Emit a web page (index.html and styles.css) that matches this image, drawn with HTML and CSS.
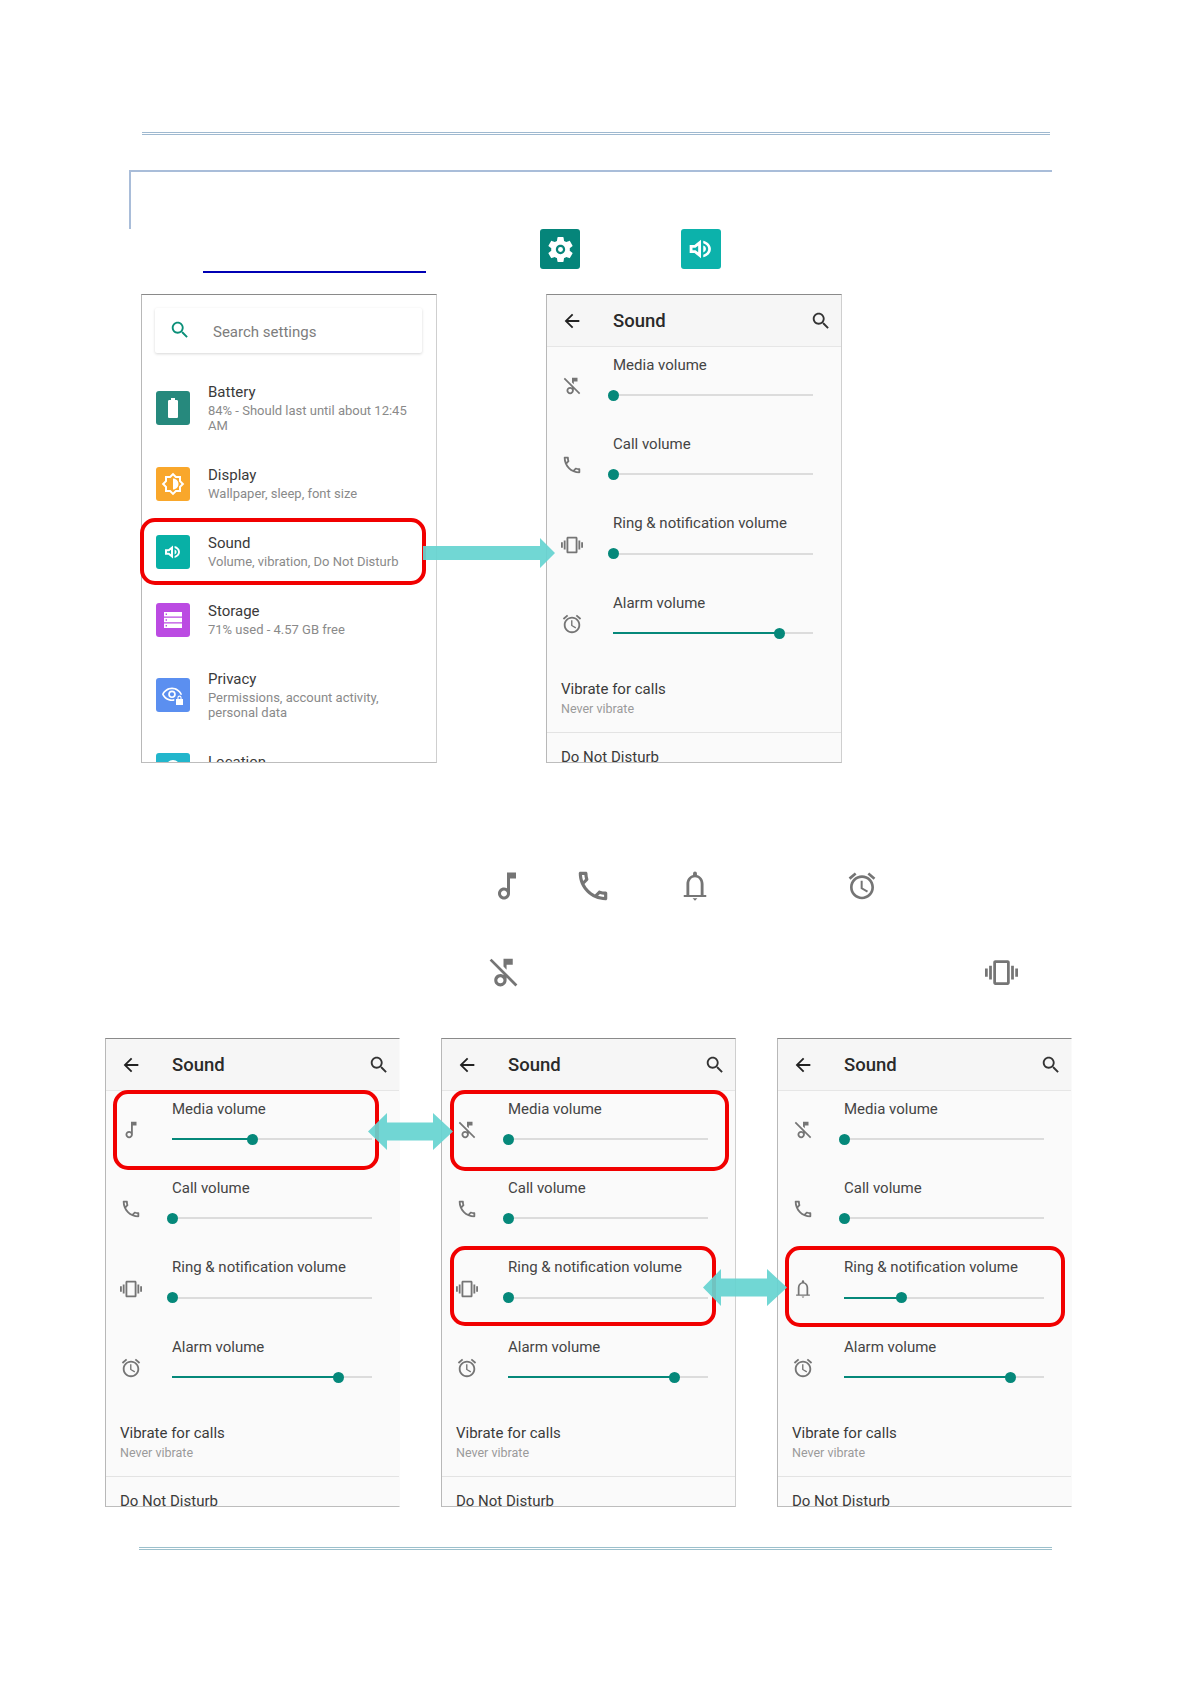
FILE: index.html
```html
<!DOCTYPE html>
<html lang="en">
<head>
<meta charset="utf-8">
<title>Sound settings</title>
<link rel="stylesheet" href="styles.css">
</head>
<body>
<svg class="sprite" aria-hidden="true">
  <symbol id="i-back" viewBox="0 0 24 24"><path d="M20 11H7.83l5.59-5.59L12 4l-8 8 8 8 1.41-1.41L7.83 13H20v-2z"/></symbol>
  <symbol id="i-search" viewBox="0 0 24 24"><path d="M15.5 14h-.79l-.28-.27C15.41 12.59 16 11.11 16 9.5 16 5.91 13.09 3 9.5 3S3 5.91 3 9.5 5.91 16 9.5 16c1.61 0 3.09-.59 4.23-1.57l.27.28v.79l5 4.99L20.49 19l-4.99-5zm-6 0C7.01 14 5 11.99 5 9.5S7.01 5 9.5 5 14 7.01 14 9.5 11.99 14 9.5 14z"/></symbol>
  <symbol id="i-note" viewBox="0 0 24 24"><path d="M12 3v10.55c-.59-.34-1.27-.55-2-.55-2.21 0-4 1.79-4 4s1.79 4 4 4 4-1.79 4-4V7h4V3h-6zm-2 16c-1.1 0-2-.9-2-2s.9-2 2-2 2 .9 2 2-.9 2-2 2z"/></symbol>
  <symbol id="i-muted" viewBox="0 0 24 24"><path d="M14 7h4V3h-6v5.18l2 2z"/><path fill-rule="evenodd" d="M4.27 3L3 4.27l9 9v.28c-.59-.34-1.27-.55-2-.55-2.21 0-4 1.79-4 4s1.79 4 4 4 4-1.79 4-4v-1.73L19.73 21 21 19.73 4.27 3zM10 19c-1.1 0-2-.9-2-2s.9-2 2-2 2 .9 2 2-.9 2-2 2z"/></symbol>
  <symbol id="i-call" viewBox="0 0 24 24"><path d="M6.54 5c.06.89.21 1.76.45 2.59l-1.2 1.2c-.41-1.2-.67-2.47-.76-3.79h1.51m9.86 12.02c.85.24 1.72.39 2.6.45v1.49c-1.32-.09-2.59-.35-3.8-.75l1.2-1.19M7.5 3H4c-.55 0-1 .45-1 1 0 9.39 7.61 17 17 17 .55 0 1-.45 1-1v-3.49c0-.55-.45-1-1-1-1.24 0-2.45-.2-3.57-.57-.1-.04-.21-.05-.31-.05-.26 0-.51.1-.71.29l-2.2 2.2c-2.83-1.45-5.15-3.76-6.59-6.59l2.2-2.2c.28-.28.36-.67.25-1.02C8.7 6.45 8.5 5.25 8.5 4c0-.55-.45-1-1-1z"/></symbol>
  <symbol id="i-bell" viewBox="0 0 24 24"><path d="M4.5 18h15v1.4h-15zM10.4 20.2h3.2L12 21.8zM12 2.4a1.300 1.300 0 0 1 1.300 1.300v.9c2.700.7 4.400 3.200 4.400 6V18h-1.900v-7.400c0-2.600-1.500-4.500-3.800-4.500s-3.800 1.900-3.800 4.500V18H6.300v-7.400c0-2.800 1.700-5.300 4.400-6v-.9A1.300 1.300 0 0 1 12 2.400z"/></symbol>
  <symbol id="i-alarm" viewBox="0 0 24 24"><path d="M22 5.72l-4.6-3.86-1.29 1.53 4.6 3.86L22 5.72zM7.88 3.39L6.6 1.86 2 5.71l1.29 1.53 4.59-3.85zM12.5 8H11v6l4.75 2.85.75-1.23-4-2.37V8zM12 4c-4.97 0-9 4.03-9 9s4.03 9 9 9c4.97 0 9-4.03 9-9s-4.03-9-9-9zm0 16c-3.87 0-7-3.13-7-7s3.13-7 7-7 7 3.13 7 7-3.13 7-7 7z"/></symbol>
  <symbol id="i-vibrate" viewBox="0 0 24 24"><path d="M0 15h2V9H0v6zm3 2h2V7H3v10zm19-8v6h2V9h-2zm-3 8h2V7h-2v10zM16.5 3h-9C6.67 3 6 3.67 6 4.5v15c0 .83.67 1.5 1.5 1.5h9c.83 0 1.5-.67 1.5-1.5v-15c0-.83-.67-1.5-1.5-1.5zM16 19H8V5h8v14z"/></symbol>
  <symbol id="i-volume" viewBox="0 0 24 24"><path fill-rule="evenodd" d="M4 9.200h3.400L12 5.400v13.200l-4.600-3.800H4zM6 11.200v1.600h2.100l1.900 1.500V9.700l-1.900 1.500z"/><path d="M13.600 6.100c3.100.8 5.400 3 5.400 5.900s-2.300 5.100-5.400 5.900v-1.900c2.100-.7 3.500-2.200 3.500-4s-1.400-3.300-3.500-4z"/><path d="M13.600 9.600c1.200.4 1.900 1.300 1.900 2.400s-.7 2-1.900 2.400z"/></symbol>
  <symbol id="i-gear" viewBox="0 0 24 24"><path d="M19.14 12.94c.04-.3.06-.61.06-.94 0-.32-.02-.64-.07-.94l2.03-1.58c.18-.14.23-.41.12-.61l-1.92-3.32c-.12-.22-.37-.29-.59-.22l-2.39.96c-.5-.38-1.03-.7-1.62-.94l-.36-2.54c-.04-.24-.24-.41-.48-.41h-3.84c-.24 0-.43.17-.47.41l-.36 2.54c-.59.24-1.13.57-1.62.94l-2.39-.96c-.22-.08-.47 0-.59.22L2.74 8.87c-.12.21-.08.47.12.61l2.03 1.58c-.05.3-.09.63-.09.94s.02.64.07.94l-2.03 1.58c-.18.14-.23.41-.12.61l1.92 3.32c.12.22.37.29.59.22l2.39-.96c.5.38 1.03.7 1.62.94l.36 2.54c.05.24.24.41.48.41h3.84c.24 0 .44-.17.47-.41l.36-2.54c.59-.24 1.13-.56 1.62-.94l2.39.96c.22.08.47 0 .59-.22l1.92-3.32c.12-.22.07-.47-.12-.61l-2.01-1.58zM12 15.6c-1.98 0-3.6-1.62-3.6-3.6s1.62-3.6 3.6-3.6 3.6 1.62 3.6 3.6-1.62 3.6-3.6 3.6z"/><circle cx="12" cy="12" r="1.9"/></symbol>
  <symbol id="i-battery" viewBox="0 0 24 24"><path d="M15.67 4H14V2h-4v2H8.33C7.6 4 7 4.6 7 5.33v15.33C7 21.4 7.6 22 8.33 22h7.33c.74 0 1.34-.6 1.34-1.33V5.33C17 4.6 16.4 4 15.67 4z"/></symbol>
  <symbol id="i-display" viewBox="0 0 24 24"><path d="M20 15.31L23.31 12 20 8.69V4h-4.69L12 .69 8.69 4H4v4.69L.69 12 4 15.31V20h4.69L12 23.31 15.31 20H20v-4.69zM18 14.48V18h-3.52L12 20.48 9.52 18H6v-3.52L3.52 12 6 9.52V6h3.52L12 3.52 14.48 6H18v3.52L20.48 12 18 14.48zM12 6.5v11c3.03 0 5.5-2.47 5.5-5.5S15.03 6.5 12 6.5z" fill-rule="evenodd"/></symbol>
  <symbol id="i-storage" viewBox="0 0 24 24"><path fill-rule="evenodd" d="M3 4h18v4.4H3zM3 9.8h18v4.4H3zM3 15.6h18V20H3zM4.6 5.5v1.4H6V5.5zM4.6 11.3v1.4H6v-1.4zM4.6 17.1v1.4H6v-1.4z"/></symbol>
  <symbol id="i-privacy" viewBox="0 0 24 24"><path fill-rule="evenodd" d="M11 4.5C6.5 4.5 2.6 7.3 1 11.3c1.6 4 5.5 6.8 10 6.8.8 0 1.6-.1 2.3-.3v-1.7c-.7.2-1.5.3-2.3.3-3.6 0-6.8-2-8.3-5.1C4.2 8.200 7.400 6.200 11 6.200s6.800 2 8.300 5.100l-.2.4h1.800l.1-.4C19.400 7.300 15.500 4.500 11 4.500zM11 7.500a3.800 3.800 0 1 0 0 7.600 3.800 3.800 0 0 0 0-7.600zM11 9.200a2.100 2.100 0 1 1 0 4.200 2.100 2.100 0 0 1 0-4.200z"/><path d="M15 16h7v6h-7zM16.400 16v-1.300a2.100 2.100 0 0 1 4.200 0V16h-1.100v-1.300a1 1 0 0 0-2 0V16z"/></symbol>
  <symbol id="i-location" viewBox="0 0 24 24"><path d="M12 2C8.130 2 5 5.130 5 9c0 5.250 7 13 7 13s7-7.750 7-13c0-3.870-3.130-7-7-7zm0 9.500a2.500 2.500 0 0 1 0-5 2.500 2.500 0 0 1 0 5z"/></symbol>
</svg>

<main class="page">
  <div class="rule"></div>
  <div class="frame"></div>

  <div class="launch-row">
    <span class="link-line"></span>
    <span class="tile tile-gear"><svg class="tile-glyph-lg"><use href="#i-gear"/></svg></span>
    <span class="tile tile-sound"><svg class="tile-glyph-vol"><use href="#i-volume"/></svg></span>
  </div>

  <section class="phones phones-top">
    <div class="phone phone-white">
      <div class="screen">
        <div class="searchbar">
          <svg class="search-glyph"><use href="#i-search"/></svg>
          <span>Search settings</span>
        </div>
        <div class="menu">
          <div class="menu-row">
            <span class="app app-battery"><svg><use href="#i-battery"/></svg></span>
            <div class="menu-text"><div class="title">Battery</div><div class="sub">84% - Should last until about 12:45 AM</div></div>
          </div>
          <div class="menu-row">
            <span class="app app-display"><svg><use href="#i-display"/></svg></span>
            <div class="menu-text"><div class="title">Display</div><div class="sub">Wallpaper, sleep, font size</div></div>
          </div>
          <div class="menu-row">
            <span class="app app-sound"><svg><use href="#i-volume"/></svg></span>
            <div class="menu-text"><div class="title">Sound</div><div class="sub">Volume, vibration, Do Not Disturb</div></div>
          </div>
          <div class="menu-row">
            <span class="app app-storage"><svg><use href="#i-storage"/></svg></span>
            <div class="menu-text"><div class="title">Storage</div><div class="sub">71% used - 4.57 GB free</div></div>
          </div>
          <div class="menu-row">
            <span class="app app-privacy"><svg><use href="#i-privacy"/></svg></span>
            <div class="menu-text"><div class="title">Privacy</div><div class="sub">Permissions, account activity, personal data</div></div>
          </div>
          <div class="menu-row">
            <span class="app app-location"><svg><use href="#i-location"/></svg></span>
            <div class="menu-text"><div class="title">Location</div></div>
          </div>
        </div>
      </div>
      <div class="ring ring-menu"></div>
    </div>

    <div class="phone">
      <div class="screen">
        <header class="bar"><svg class="bar-back"><use href="#i-back"/></svg><span class="bar-title">Sound</span><svg class="bar-search"><use href="#i-search"/></svg></header>
        <div class="vol"><svg class="vol-glyph"><use href="#i-muted"/></svg><div class="vol-main"><div class="vol-label">Media volume</div><div class="track"><div class="fill" style="width:0%"><span class="thumb"></span></div></div></div></div>
        <div class="vol"><svg class="vol-glyph"><use href="#i-call"/></svg><div class="vol-main"><div class="vol-label">Call volume</div><div class="track"><div class="fill" style="width:0%"><span class="thumb"></span></div></div></div></div>
        <div class="vol"><svg class="vol-glyph"><use href="#i-vibrate"/></svg><div class="vol-main"><div class="vol-label">Ring &amp; notification volume</div><div class="track"><div class="fill" style="width:0%"><span class="thumb"></span></div></div></div></div>
        <div class="vol"><svg class="vol-glyph"><use href="#i-alarm"/></svg><div class="vol-main"><div class="vol-label">Alarm volume</div><div class="track"><div class="fill" style="width:83%"><span class="thumb"></span></div></div></div></div>
        <div class="vibrate"><div class="title">Vibrate for calls</div><div class="sub">Never vibrate</div></div>
        <div class="dnd">Do Not Disturb</div>
      </div>
    </div>

    <svg class="arrow arrow-single" width="132" height="30" viewBox="0 0 132 30"><path d="M0 8h117V0l15 15-15 15v-8H0z"/></svg>
  </section>

  <div class="glyph-row glyph-row-a">
    <svg class="glyph"><use href="#i-note"/></svg>
    <svg class="glyph glyph-call"><use href="#i-call"/></svg>
    <svg class="glyph glyph-bell"><use href="#i-bell"/></svg>
    <svg class="glyph glyph-alarm"><use href="#i-alarm"/></svg>
  </div>
  <div class="glyph-row glyph-row-b">
    <svg class="glyph glyph-muted"><use href="#i-muted"/></svg>
    <svg class="glyph glyph-vibrate"><use href="#i-vibrate"/></svg>
  </div>

  <section class="phones phones-bottom">
    <div class="phone phone-open">
      <div class="screen">
        <header class="bar"><svg class="bar-back"><use href="#i-back"/></svg><span class="bar-title">Sound</span><svg class="bar-search"><use href="#i-search"/></svg></header>
        <div class="vol"><svg class="vol-glyph"><use href="#i-note"/></svg><div class="vol-main"><div class="vol-label">Media volume</div><div class="track"><div class="fill" style="width:40%"><span class="thumb"></span></div></div></div></div>
        <div class="vol"><svg class="vol-glyph"><use href="#i-call"/></svg><div class="vol-main"><div class="vol-label">Call volume</div><div class="track"><div class="fill" style="width:0%"><span class="thumb"></span></div></div></div></div>
        <div class="vol"><svg class="vol-glyph"><use href="#i-vibrate"/></svg><div class="vol-main"><div class="vol-label">Ring &amp; notification volume</div><div class="track"><div class="fill" style="width:0%"><span class="thumb"></span></div></div></div></div>
        <div class="vol"><svg class="vol-glyph"><use href="#i-alarm"/></svg><div class="vol-main"><div class="vol-label">Alarm volume</div><div class="track"><div class="fill" style="width:83%"><span class="thumb"></span></div></div></div></div>
        <div class="vibrate"><div class="title">Vibrate for calls</div><div class="sub">Never vibrate</div></div>
        <div class="dnd">Do Not Disturb</div>
      </div>
      <div class="ring ring-a"></div>
    </div>

    <div class="phone">
      <div class="screen">
        <header class="bar"><svg class="bar-back"><use href="#i-back"/></svg><span class="bar-title">Sound</span><svg class="bar-search"><use href="#i-search"/></svg></header>
        <div class="vol"><svg class="vol-glyph"><use href="#i-muted"/></svg><div class="vol-main"><div class="vol-label">Media volume</div><div class="track"><div class="fill" style="width:0%"><span class="thumb"></span></div></div></div></div>
        <div class="vol"><svg class="vol-glyph"><use href="#i-call"/></svg><div class="vol-main"><div class="vol-label">Call volume</div><div class="track"><div class="fill" style="width:0%"><span class="thumb"></span></div></div></div></div>
        <div class="vol"><svg class="vol-glyph"><use href="#i-vibrate"/></svg><div class="vol-main"><div class="vol-label">Ring &amp; notification volume</div><div class="track"><div class="fill" style="width:0%"><span class="thumb"></span></div></div></div></div>
        <div class="vol"><svg class="vol-glyph"><use href="#i-alarm"/></svg><div class="vol-main"><div class="vol-label">Alarm volume</div><div class="track"><div class="fill" style="width:83%"><span class="thumb"></span></div></div></div></div>
        <div class="vibrate"><div class="title">Vibrate for calls</div><div class="sub">Never vibrate</div></div>
        <div class="dnd">Do Not Disturb</div>
      </div>
      <div class="ring ring-b1"></div>
      <div class="ring ring-b2"></div>
    </div>

    <div class="phone phone-open">
      <div class="screen">
        <header class="bar"><svg class="bar-back"><use href="#i-back"/></svg><span class="bar-title">Sound</span><svg class="bar-search"><use href="#i-search"/></svg></header>
        <div class="vol"><svg class="vol-glyph"><use href="#i-muted"/></svg><div class="vol-main"><div class="vol-label">Media volume</div><div class="track"><div class="fill" style="width:0%"><span class="thumb"></span></div></div></div></div>
        <div class="vol"><svg class="vol-glyph"><use href="#i-call"/></svg><div class="vol-main"><div class="vol-label">Call volume</div><div class="track"><div class="fill" style="width:0%"><span class="thumb"></span></div></div></div></div>
        <div class="vol"><svg class="vol-glyph"><use href="#i-bell"/></svg><div class="vol-main"><div class="vol-label">Ring &amp; notification volume</div><div class="track"><div class="fill" style="width:28.500%"><span class="thumb"></span></div></div></div></div>
        <div class="vol"><svg class="vol-glyph"><use href="#i-alarm"/></svg><div class="vol-main"><div class="vol-label">Alarm volume</div><div class="track"><div class="fill" style="width:83%"><span class="thumb"></span></div></div></div></div>
        <div class="vibrate"><div class="title">Vibrate for calls</div><div class="sub">Never vibrate</div></div>
        <div class="dnd">Do Not Disturb</div>
      </div>
      <div class="ring ring-c"></div>
    </div>

    <svg class="arrow arrow-double-a" width="85" height="37" viewBox="0 0 85 37"><path d="M0 18.500L19 0v9.500h46V0l20 18.500L65 37v-9.500H19V37z"/></svg>
    <svg class="arrow arrow-double-b" width="84" height="37" viewBox="0 0 84 37"><path d="M0 18.500L18 0v9.500h46V0l20 18.500L64 37v-9.500H18V37z"/></svg>
  </section>

  <div class="rule rule-bottom"></div>
</main>
</body>
</html>
```

FILE: styles.css
```css
* { box-sizing: border-box; }

html, body { margin: 0; padding: 0; background: #fff; }

body { font-family: Roboto, "Noto Sans", sans-serif; color: #333; }

.sprite { position: absolute; width: 0; height: 0; overflow: hidden; }

.page { width: 1191px; height: 1683px; padding-top: 132px; overflow: hidden; }

.rule {
  width: 908px;
  height: 3px;
  margin-left: 142px;
  border-top: 1px solid #9fb9d0;
  border-bottom: 1px solid #9fb9d0;
}

.rule-bottom {
  width: 913px;
  margin-top: 40px;
  margin-left: 139px;
  border-color: #9cc0cc;
}

.frame {
  width: 923px;
  height: 59px;
  margin-top: 35px;
  margin-left: 129px;
  border-top: 2px solid #a9bdd9;
  border-left: 2px solid #a9bdd9;
}

.launch-row {
  display: flex;
  height: 44px;
  padding-left: 203px;
}

.link-line {
  width: 223px;
  height: 2px;
  margin-top: 42px;
  background: #0000b4;
}

.tile {
  display: flex;
  align-items: center;
  justify-content: center;
  width: 40px;
  height: 40px;
  border-radius: 3px;
  fill: #fff;
}

.tile-gear { margin-left: 114px; background: #05857a; }
.tile-sound { margin-left: 101px; background: #0cb2ab; }
.tile-glyph-lg { width: 31px; height: 31px; }
.tile-glyph-vol { width: 34px; height: 34px; }

.phones { position: relative; display: flex; }

.phones-top { gap: 109px; margin-top: 21px; padding-left: 141px; }
.phones-bottom { gap: 41px; margin-top: 48px; padding-left: 105px; }

.phone {
  position: relative;
  width: 296px;
  height: 469px;
  border-top: 1px solid #8a8a8a;
  border-right: 1px solid #cfcfcf;
  border-bottom: 1px solid #bdbdbd;
  border-left: 1px solid #b8b8b8;
  background: #fafafa;
}

.phones-bottom .phone { width: 295px; }
.phone-white { background: #fff; }
.phone-open { border-right-color: transparent; }

.screen { height: 100%; overflow: hidden; }

/* Settings list */
.searchbar {
  display: flex;
  align-items: center;
  width: 267px;
  height: 45px;
  margin: 13px 0 0 13px;
  padding: 2px 0 0 14px;
  border-radius: 2px;
  background: #fff;
  box-shadow: 0 1px 3px rgba(0, 0, 0, .16);
  font-size: 15px;
  color: #7d7d7d;
}

.search-glyph { width: 22px; height: 22px; margin: -3px 22px 0 0; fill: #0a8f78; }

.menu { padding-top: 13.500px; }

.menu-row {
  display: flex;
  align-items: center;
  gap: 18px;
  padding: 16.500px 0 16.500px 14px;
}

.menu-text { width: 210px; min-height: 34px; }

.title { font-size: 15px; line-height: 19px; color: #3a3a3a; }
.sub { font-size: 13px; line-height: 15px; color: #8a8a8a; }

.menu-text .sub { margin-top: 1px; }

.app {
  display: flex;
  flex: none;
  align-items: center;
  justify-content: center;
  width: 34px;
  height: 34px;
  border-radius: 3px;
  fill: #fff;
}

.app svg { width: 24px; height: 24px; }

.app-battery { background: #26897d; }
.app-display { background: #f9a72b; }
.app-sound { background: #08b0a6; }
.app-storage { background: #bb4be2; }
.app-privacy { background: #5b8ff0; }
.app-location { background: #22b6cc; }

/* Sound screen */
.bar {
  display: flex;
  align-items: center;
  height: 52px;
  padding: 0 9px 0 14px;
  border-bottom: 1px solid #e6e6e6;
  background: #f6f6f6;
}

.bar-back { width: 22px; height: 22px; margin-right: 30px; fill: #222; }
.bar-title { font-size: 18.500px; font-weight: 500; color: #2a2a2a; }
.bar-search { width: 22px; height: 22px; margin-left: auto; fill: #333; }

.vol { display: flex; height: 79.400px; }

.vol-glyph {
  flex: none;
  width: 22px;
  height: 22px;
  margin: 28px 30px 0 14px;
  fill: #757575;
}

.vol-main { width: 200px; padding-top: 8.500px; }

.vol-label { font-size: 15px; line-height: 18px; color: #444; }

.track {
  position: relative;
  height: 2px;
  margin-top: 20.500px;
  background: #dcdcdc;
}

.fill { position: relative; height: 2px; background: #05887a; }

.thumb {
  position: absolute;
  top: -4.500px;
  right: -5.500px;
  width: 11px;
  height: 11px;
  border-radius: 50%;
  background: #05887a;
}

.vibrate { padding: 15.500px 0 16px 14px; border-bottom: 1px solid #e3e3e3; }

.vibrate .sub { margin-top: 2px; font-size: 12.500px; color: #9a9a9a; }

.dnd { padding: 15px 0 0 14px; font-size: 15px; line-height: 19px; color: #3a3a3a; }

/* Red call-out rings */
.ring {
  position: absolute;
  border: 4px solid #f10000;
  border-radius: 15px;
}

.ring-menu { top: 223px; left: -2px; width: 286px; height: 67px; }
.ring-a { top: 51px; left: 7px; width: 266px; height: 80px; }
.ring-b1 { top: 51px; left: 8px; width: 279px; height: 81px; }
.ring-b2 { top: 207px; left: 8px; width: 266px; height: 80px; }
.ring-c { top: 207px; left: 7px; width: 280px; height: 81px; }

/* Teal arrows */
.arrow { position: absolute; fill: #66d4d1; opacity: .92; }

.arrow-single { top: 244px; left: 423px; }
.arrow-double-a { top: 75px; left: 368px; }
.arrow-double-b { top: 231px; left: 703px; }

/* Loose glyphs */
.glyph-row { display: flex; align-items: center; height: 36px; fill: #757575; }

.glyph-row-a { margin-top: 105px; padding-left: 489px; }
.glyph-row-b { margin-top: 50px; padding-left: 485px; }

.glyph { flex: none; width: 36px; height: 36px; }

.glyph-call { width: 38px; height: 38px; margin-left: 49px; }
.glyph-bell { margin-left: 65px; }
.glyph-alarm { width: 32px; height: 32px; margin-left: 133px; }
.glyph-muted { width: 37px; height: 37px; }
.glyph-vibrate { width: 33px; height: 33px; margin-left: 463px; }
```
